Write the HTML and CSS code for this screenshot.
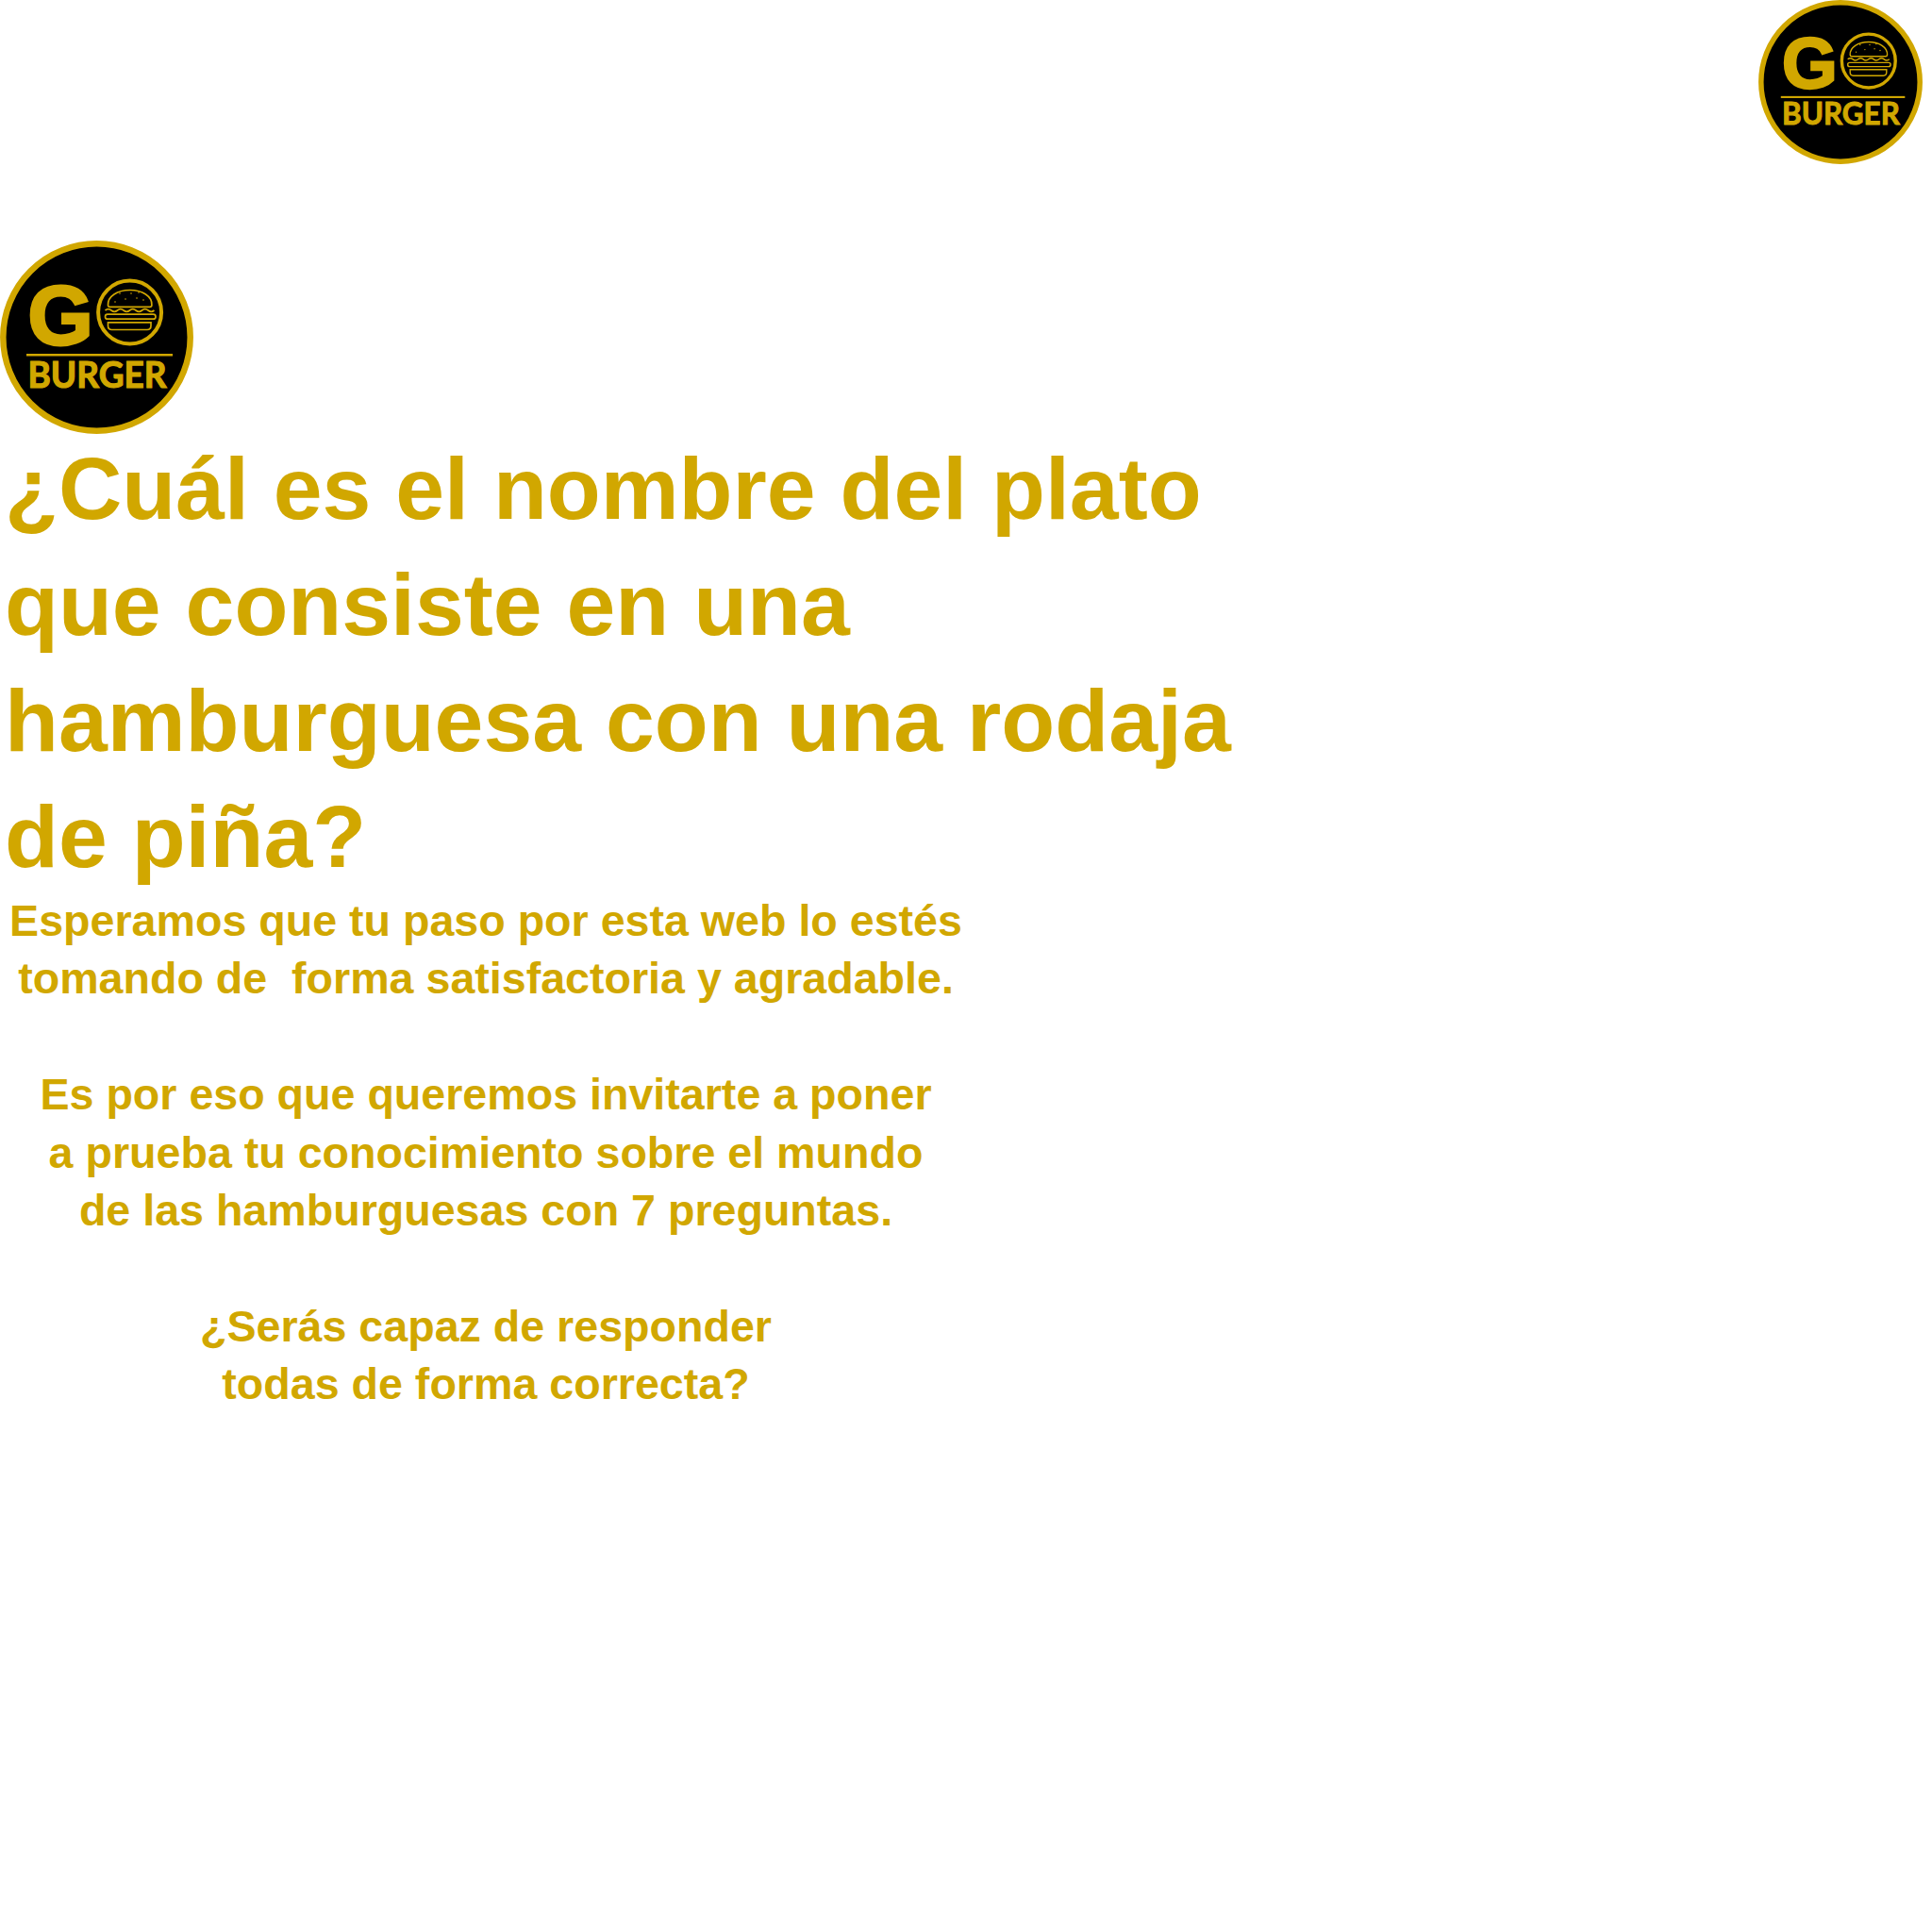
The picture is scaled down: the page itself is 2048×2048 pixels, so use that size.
FILE: index.html
```html
<!DOCTYPE html>
<html lang="es">
<head>
<meta charset="utf-8">
<title>Go Burger</title>
<link rel="stylesheet" href="styles.css">
</head>
<body>
<svg class="defs" width="0" height="0" aria-hidden="true">
  <symbol id="logo" class="logo-art" viewBox="0 0 205 205">
    <circle class="disc" cx="102.5" cy="102.5" r="99.2"/>
    <text class="logo-g" x="64" y="110" text-anchor="middle">G</text>
    <circle class="line" cx="137.600" cy="76" r="33.500" stroke-width="4"/>
    <path class="line" stroke-width="1.700" d="M114.500 68.500c-.6-9.500 10-16 23.200-16s23.800 6.500 23.200 16c-.1 1.200-1 1.800-2 1.800h-42.400c-1 0-1.900-.6-2-1.800z"/>
    <g class="dots"><circle cx="122" cy="65" r=".8"/><circle cx="127" cy="56" r=".8"/><circle cx="133" cy="62" r=".8"/><circle cx="139" cy="56" r=".8"/><circle cx="145" cy="61" r=".8"/><circle cx="152" cy="63" r=".8"/><circle cx="147" cy="55" r=".8"/></g>
    <path class="line" stroke-width="1.700" d="M111.500 74q3.200-2.600 6.500 0t6.500 0 6.500 0 6.500 0 6.500 0 6.500 0 6.500 0 6.500 0"/>
    <rect class="line" stroke-width="1.700" x="111.500" y="78.200" width="53.500" height="5" rx="2.500"/>
    <path class="line" stroke-width="1.700" d="M114.500 86.800h45.500v3.400c0 2.500-1.500 4.300-4 4.300h-37.500c-2.500 0-4-1.800-4-4.300z"/>
    <rect class="bar" x="28" y="120" width="155" height="2.500"/>
    <text class="logo-b" x="103" y="156" text-anchor="middle" textLength="147" lengthAdjust="spacingAndGlyphs">BURGER</text>
  </symbol>
</svg>
<header class="top">
  <svg class="logo logo-small" role="img" aria-label="Go Burger"><use href="#logo"/></svg>
</header>
<main class="intro">
  <svg class="logo logo-large" role="img" aria-label="Go Burger"><use href="#logo"/></svg>
  <h1 class="question">¿Cuál es el nombre del plato que consiste en una hamburguesa con una rodaja de piña?</h1>
  <p class="message">Esperamos que tu paso por esta web lo estés<br>tomando de &nbsp;forma satisfactoria y agradable.<br><br>Es por eso que queremos invitarte a poner<br>a prueba tu conocimiento sobre el mundo<br>de las hamburguesas con 7 preguntas.<br><br>¿Serás capaz de responder<br>todas de forma correcta?</p>
</main>
</body>
</html>
```
FILE: styles.css
```css
html, body {
  margin: 0;
  padding: 0;
  background: #fff;
}
body {
  font-family: "Liberation Sans", Arial, sans-serif;
  color: #d1a700;
}
.defs {
  position: absolute;
}
.logo-art {
  overflow: visible;
}
.top {
  display: flex;
  justify-content: flex-end;
  padding-right: 10px;
  height: 255px;
}
.logo {
  display: block;
}
.logo-small {
  width: 174px;
  height: 174px;
}
.logo-large {
  width: 205px;
  height: 205px;
}
.disc {
  fill: #000;
  stroke: #d1a700;
  stroke-width: 6.500;
}
.line {
  fill: none;
  stroke: #d1a700;
}
.dots, .bar {
  fill: #d1a700;
}
.logo-g {
  fill: #d1a700;
  stroke: #d1a700;
  stroke-width: 3;
  font-family: "Liberation Sans", sans-serif;
  font-weight: 700;
  font-size: 89px;
}
.logo-b {
  fill: #d1a700;
  stroke: #d1a700;
  stroke-width: 1.200;
  font-family: Lato, sans-serif;
  font-weight: 700;
  font-size: 39px;
}
.question {
  margin: -3px 0 0;
  padding: 0 0 0 5px;
  width: 1340px;
  font-size: 93.200px;
  line-height: 123px;
  font-weight: 700;
}
.message {
  margin: -3px 0 0;
  width: 1030px;
  text-align: center;
  font-size: 46.600px;
  line-height: 61.400px;
  font-weight: 700;
}
```
